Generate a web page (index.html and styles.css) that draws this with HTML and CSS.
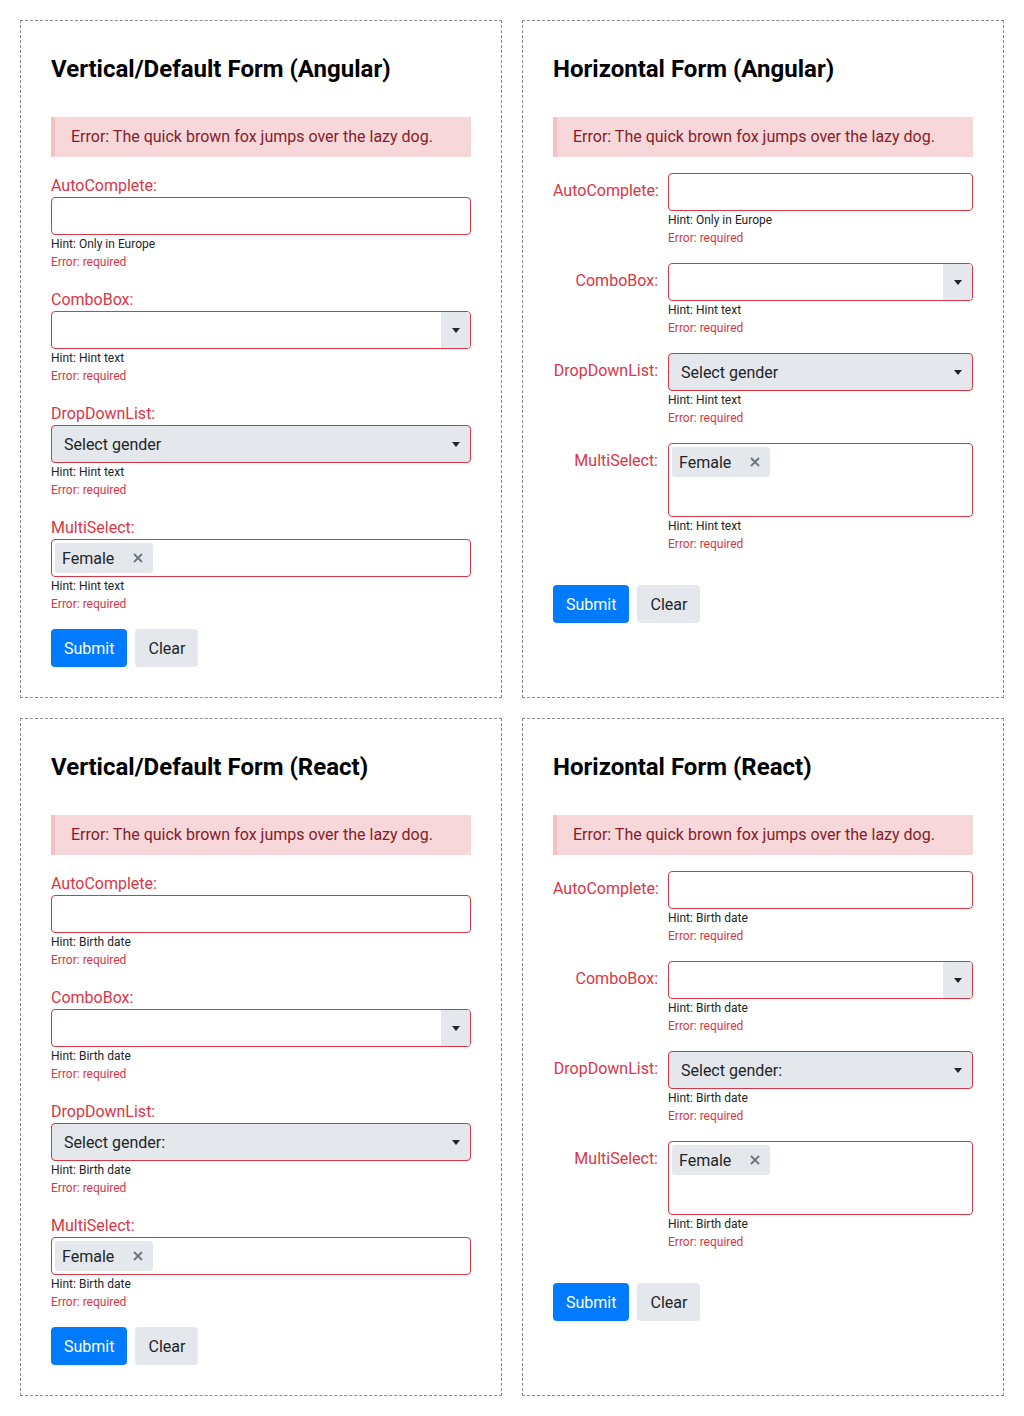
FILE: index.html
```html
<!DOCTYPE html>
<html lang="en">
<head>
<meta charset="utf-8">
<title>Forms</title>
<link rel="stylesheet" href="styles.css">
</head>
<body>
<div class="grid">

  <section class="panel">
    <h2 class="title">Vertical/Default Form (Angular)</h2>
    <div class="alert">Error: The quick brown fox jumps over the lazy dog.</div>
    <div class="group">
      <label class="label">AutoComplete:</label>
      <div class="field">
        <div class="input"></div>
        <div class="hint">Hint: Only in Europe</div>
        <div class="err">Error: required</div>
      </div>
    </div>
    <div class="group">
      <label class="label">ComboBox:</label>
      <div class="field">
        <div class="input combo"><span class="combo-text"></span><span class="combo-btn"><span class="caret"></span></span></div>
        <div class="hint">Hint: Hint text</div>
        <div class="err">Error: required</div>
      </div>
    </div>
    <div class="group">
      <label class="label">DropDownList:</label>
      <div class="field">
        <div class="input ddl"><span>Select gender</span><span class="caret"></span></div>
        <div class="hint">Hint: Hint text</div>
        <div class="err">Error: required</div>
      </div>
    </div>
    <div class="group">
      <label class="label">MultiSelect:</label>
      <div class="field">
        <div class="input multi"><span class="chip">Female<svg class="x" viewBox="0 0 10 10" width="10" height="10"><path d="M1 1L9 9M9 1L1 9"/></svg></span></div>
        <div class="hint">Hint: Hint text</div>
        <div class="err">Error: required</div>
      </div>
    </div>
    <div class="actions">
      <button class="btn primary">Submit</button>
      <button class="btn secondary">Clear</button>
    </div>
  </section>

  <section class="panel horizontal">
    <h2 class="title">Horizontal Form (Angular)</h2>
    <div class="alert">Error: The quick brown fox jumps over the lazy dog.</div>
    <div class="group">
      <label class="label">AutoComplete:</label>
      <div class="field">
        <div class="input"></div>
        <div class="hint">Hint: Only in Europe</div>
        <div class="err">Error: required</div>
      </div>
    </div>
    <div class="group">
      <label class="label">ComboBox:</label>
      <div class="field">
        <div class="input combo"><span class="combo-text"></span><span class="combo-btn"><span class="caret"></span></span></div>
        <div class="hint">Hint: Hint text</div>
        <div class="err">Error: required</div>
      </div>
    </div>
    <div class="group">
      <label class="label">DropDownList:</label>
      <div class="field">
        <div class="input ddl"><span>Select gender</span><span class="caret"></span></div>
        <div class="hint">Hint: Hint text</div>
        <div class="err">Error: required</div>
      </div>
    </div>
    <div class="group">
      <label class="label">MultiSelect:</label>
      <div class="field">
        <div class="input multi tall"><span class="chip">Female<svg class="x" viewBox="0 0 10 10" width="10" height="10"><path d="M1 1L9 9M9 1L1 9"/></svg></span></div>
        <div class="hint">Hint: Hint text</div>
        <div class="err">Error: required</div>
      </div>
    </div>
    <div class="actions">
      <button class="btn primary">Submit</button>
      <button class="btn secondary">Clear</button>
    </div>
  </section>

  <section class="panel">
    <h2 class="title">Vertical/Default Form (React)</h2>
    <div class="alert">Error: The quick brown fox jumps over the lazy dog.</div>
    <div class="group">
      <label class="label">AutoComplete:</label>
      <div class="field">
        <div class="input"></div>
        <div class="hint">Hint: Birth date</div>
        <div class="err">Error: required</div>
      </div>
    </div>
    <div class="group">
      <label class="label">ComboBox:</label>
      <div class="field">
        <div class="input combo"><span class="combo-text"></span><span class="combo-btn"><span class="caret"></span></span></div>
        <div class="hint">Hint: Birth date</div>
        <div class="err">Error: required</div>
      </div>
    </div>
    <div class="group">
      <label class="label">DropDownList:</label>
      <div class="field">
        <div class="input ddl"><span>Select gender:</span><span class="caret"></span></div>
        <div class="hint">Hint: Birth date</div>
        <div class="err">Error: required</div>
      </div>
    </div>
    <div class="group">
      <label class="label">MultiSelect:</label>
      <div class="field">
        <div class="input multi"><span class="chip">Female<svg class="x" viewBox="0 0 10 10" width="10" height="10"><path d="M1 1L9 9M9 1L1 9"/></svg></span></div>
        <div class="hint">Hint: Birth date</div>
        <div class="err">Error: required</div>
      </div>
    </div>
    <div class="actions">
      <button class="btn primary">Submit</button>
      <button class="btn secondary">Clear</button>
    </div>
  </section>

  <section class="panel horizontal">
    <h2 class="title">Horizontal Form (React)</h2>
    <div class="alert">Error: The quick brown fox jumps over the lazy dog.</div>
    <div class="group">
      <label class="label">AutoComplete:</label>
      <div class="field">
        <div class="input"></div>
        <div class="hint">Hint: Birth date</div>
        <div class="err">Error: required</div>
      </div>
    </div>
    <div class="group">
      <label class="label">ComboBox:</label>
      <div class="field">
        <div class="input combo"><span class="combo-text"></span><span class="combo-btn"><span class="caret"></span></span></div>
        <div class="hint">Hint: Birth date</div>
        <div class="err">Error: required</div>
      </div>
    </div>
    <div class="group">
      <label class="label">DropDownList:</label>
      <div class="field">
        <div class="input ddl"><span>Select gender:</span><span class="caret"></span></div>
        <div class="hint">Hint: Birth date</div>
        <div class="err">Error: required</div>
      </div>
    </div>
    <div class="group">
      <label class="label">MultiSelect:</label>
      <div class="field">
        <div class="input multi tall"><span class="chip">Female<svg class="x" viewBox="0 0 10 10" width="10" height="10"><path d="M1 1L9 9M9 1L1 9"/></svg></span></div>
        <div class="hint">Hint: Birth date</div>
        <div class="err">Error: required</div>
      </div>
    </div>
    <div class="actions">
      <button class="btn primary">Submit</button>
      <button class="btn secondary">Clear</button>
    </div>
  </section>

</div>
</body>
</html>
```

FILE: styles.css
```css
* { box-sizing: border-box; }

body {
  margin: 0;
  padding: 20px;
  font-family: Roboto, "Liberation Sans", Arial, sans-serif;
  color: #212529;
  background: #fff;
}

.grid {
  display: grid;
  grid-template-columns: 482px 482px;
  gap: 20px;
}

.panel {
  border: 1px dashed #8a8a8a;
  padding: 30px;
}

.title {
  margin: 0 0 30px 0;
  font-size: 24px;
  line-height: 36px;
  font-weight: 700;
  color: #000;
}

.alert {
  background: #f8d7da;
  border-left: 4px solid #f1c1c6;
  color: #842029;
  font-size: 16px;
  line-height: 24px;
  padding: 8px 16px;
  margin-bottom: 16px;
}

.group {
  margin-bottom: 16px;
}

.label {
  display: block;
  color: #dc3545;
  font-size: 16px;
  line-height: 24px;
  padding-top: 1px;
  margin-bottom: -1px;
}

.input {
  height: 38px;
  border: 1px solid #dc3545;
  border-radius: 4px;
  background: #fff;
}

.combo {
  display: flex;
  overflow: hidden;
}
.combo-text { flex: 1; }
.combo-btn {
  width: 29px;
  background: #e4e7eb;
  display: flex;
  align-items: center;
  justify-content: center;
}

.caret {
  width: 0;
  height: 0;
  border-left: 4px solid transparent;
  border-right: 4px solid transparent;
  border-top: 5px solid #212529;
}

.ddl {
  background: #e4e7eb;
  display: flex;
  align-items: center;
  justify-content: space-between;
  padding: 0 10px 0 12px;
  font-size: 16px;
  color: #212529;
}

.multi {
  padding: 3px;
  display: flex;
  align-items: flex-start;
}
.multi.tall { height: 74px; }

.chip {
  display: inline-flex;
  align-items: center;
  height: 30px;
  padding: 0 10px 0 7px;
  background: #e4e7eb;
  border-radius: 3px;
  font-size: 16px;
  color: #212529;
}
.x {
  margin-left: 19px;
  stroke: #6c757d;
  stroke-width: 1.8;
  fill: none;
}

.hint {
  font-size: 12px;
  line-height: 18px;
  color: #212529;
}
.err {
  font-size: 12px;
  line-height: 18px;
  color: #dc3545;
}

.actions {
  display: flex;
  gap: 8px;
}

.btn {
  height: 38px;
  padding: 0 13px;
  border: 0;
  border-radius: 4px;
  font-family: inherit;
  font-size: 16px;
}
.primary { background: #007bff; color: #fff; }
.secondary { background: #e4e7eb; color: #212529; }

/* horizontal layout */
.horizontal .group {
  display: flex;
  gap: 10px;
}
.horizontal .label {
  width: 105px;
  flex: none;
  text-align: right;
  padding-top: 6px;
  margin-bottom: 0;
}
.horizontal .field {
  flex: 1;
}
.horizontal .actions {
  margin-top: 32px;
}
```
